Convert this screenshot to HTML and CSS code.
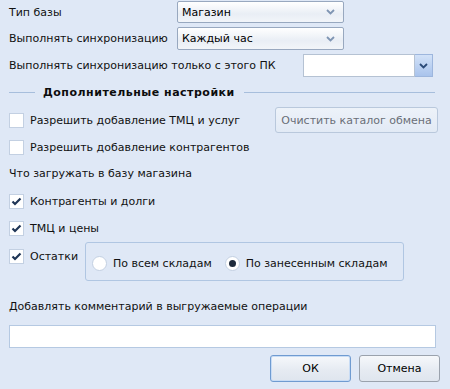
FILE: index.html
```html
<!DOCTYPE html>
<html>
<head>
<meta charset="utf-8">
<link rel="stylesheet" href="styles.css">
</head>
<body>
<div class="form">
  <div class="row r1">
    <span class="lbl w168">Тип базы</span>
    <div class="select s1"><span>Магазин</span><svg class="chev" width="9" height="6" viewBox="0 0 9 6"><path d="M1 1 L4.5 4.5 L8 1" fill="none" stroke="#7f95b3" stroke-width="1.8"/></svg></div>
  </div>
  <div class="row r2">
    <span class="lbl w168">Выполнять синхронизацию</span>
    <div class="select s2"><span>Каждый час</span><svg class="chev" width="9" height="6" viewBox="0 0 9 6"><path d="M1 1 L4.5 4.5 L8 1" fill="none" stroke="#7f95b3" stroke-width="1.8"/></svg></div>
  </div>
  <div class="row r3">
    <span class="lbl grow">Выполнять синхронизацию только с этого ПК</span>
    <div class="combo"><div class="cinput"></div><div class="trigger"><svg width="9" height="6" viewBox="0 0 9 6"><path d="M1 1 L4.5 4.5 L8 1" fill="none" stroke="#2b4a78" stroke-width="1.8"/></svg></div></div>
  </div>
  <div class="legend"><span class="line l1"></span><span class="ltext">Дополнительные настройки</span><span class="line l2"></span></div>
  <div class="row r4">
    <span class="cb"></span><span class="lbl grow">Разрешить добавление ТМЦ и услуг</span>
    <div class="btn clear">Очистить каталог обмена</div>
  </div>
  <div class="row r5"><span class="cb"></span><span class="lbl">Разрешить добавление контрагентов</span></div>
  <div class="row r6"><span class="lbl">Что загружать в базу магазина</span></div>
  <div class="row r7"><span class="cb on"><svg width="11" height="9" viewBox="0 0 11 9"><path d="M1.5 4.5 L4 7 L9.5 1.5" fill="none" stroke="#1f3556" stroke-width="2.2"/></svg></span><span class="lbl">Контрагенты и долги</span></div>
  <div class="row r8"><span class="cb on"><svg width="11" height="9" viewBox="0 0 11 9"><path d="M1.5 4.5 L4 7 L9.5 1.5" fill="none" stroke="#1f3556" stroke-width="2.2"/></svg></span><span class="lbl">ТМЦ и цены</span></div>
  <div class="row r9">
    <div class="ost"><span class="cb on"><svg width="11" height="9" viewBox="0 0 11 9"><path d="M1.5 4.5 L4 7 L9.5 1.5" fill="none" stroke="#1f3556" stroke-width="2.2"/></svg></span><span class="lbl">Остатки</span></div>
    <div class="rgroup">
      <span class="radio"></span><span class="lbl rl1">По всем складам</span>
      <span class="radio sel"><span class="dot"></span></span><span class="lbl">По занесенным складам</span>
    </div>
  </div>
  <div class="row r10"><span class="lbl">Добавлять комментарий в выгружаемые операции</span></div>
  <div class="tinput"></div>
  <div class="buttons">
    <div class="btn ok">ОК</div>
    <div class="btn cancel">Отмена</div>
  </div>
</div>
</body>
</html>
```
FILE: styles.css
```css
html, body { margin: 0; padding: 0; }
body {
  background: #dfe8f6;
  font-family: "DejaVu Sans", Verdana, sans-serif;
  font-size: 11px;
  color: #111;
  width: 450px;
  height: 389px;
  overflow: hidden;
}
.form { padding: 1px 0 0 9px; }
.row { display: flex; align-items: center; }
.lbl { white-space: nowrap; }
.w168 { width: 168px; }
.grow { flex: 1; }
.select {
  box-sizing: border-box;
  width: 167px;
  border: 1px solid #98a8bf;
  border-radius: 2px;
  background: linear-gradient(#ffffff 0%, #e9eef5 60%, #f2f5f9 100%);
  display: flex; align-items: center; justify-content: space-between;
  padding: 0 8px 0 4px;
  color: #000;
}
.s1 { height: 22px; }
.s2 { height: 23px; }
.r2 { margin-top: 4px; }
.r3 { margin-top: 4px; padding-right: 17px; }
.combo { display: flex; }
.cinput { box-sizing: border-box; width: 112px; height: 23px; background: #fff; border: 1px solid #b5c2d3; }
.trigger {
  box-sizing: border-box; width: 18px; height: 23px;
  background: linear-gradient(#d2e2f8, #a9c3ec);
  border: 1px solid #9db6dd; border-left: none;
  display: flex; align-items: center; justify-content: center;
}
.legend { display: flex; align-items: center; margin-top: 8px; height: 14px; padding-right: 15px; }
.line { height: 1px; background: #a7bedc; }
.l1 { width: 26px; }
.l2 { flex: 1; }
.ltext { font-weight: bold; padding: 0 9px 0 8px; color: #0d0d0d; letter-spacing: 0.5px; }
.cb {
  box-sizing: border-box; width: 15px; height: 15px;
  background: #fff; border: 1px solid #c3d0e2;
  margin-right: 6px; flex: none;
  display: flex; align-items: center; justify-content: center;
}
.cb svg { margin-top: -1px; }
.r4 { margin-top: 8px; padding-right: 12px; }
.btn {
  box-sizing: border-box;
  border-radius: 3px;
  display: flex; align-items: center; justify-content: center;
  white-space: nowrap;
}
.clear {
  width: 163px; height: 26px;
  border: 1px solid #b9c8dc;
  background: linear-gradient(#edf2f9, #e2eaf5);
  color: #6a6f78;
}
.r5 { margin-top: 7px; }
.r6 { margin-top: 11px; height: 14px; }
.r7 { margin-top: 14px; }
.r8 { margin-top: 12px; }
.r9 { margin-top: 6px; align-items: flex-start; }
.ost { display: flex; align-items: center; margin-top: 7px; width: 76px; }
.rgroup {
  box-sizing: border-box; width: 319px; height: 39px;
  border: 1px solid #b0c6e2; border-radius: 3px;
  display: flex; align-items: center;
  padding: 4px 0 0 6px;
}
.radio {
  box-sizing: border-box; width: 15px; height: 15px; border-radius: 50%;
  background: #fff; border: 1px solid #c3d0e2; margin-right: 6px; flex: none;
  display: flex; align-items: center; justify-content: center;
}
.dot { width: 7px; height: 7px; border-radius: 50%; background: #1e2a3c; }
.rl1 { margin-right: 13px; }
.r10 { margin-top: 18px; height: 14px; }
.tinput {
  box-sizing: border-box; width: 427px; height: 23px; margin-top: 12px;
  background: #fff; border: 1px solid #b5c9e2;
}
.buttons { display: flex; gap: 8px; margin-top: 7px; padding-left: 261px; }
.ok, .cancel { width: 81px; height: 27px; background: linear-gradient(#f6f8fb 0%, #e6ebf2 55%, #dfe5ee 100%); color: #000; }
.ok { border: 1px solid #6f9bd1; box-shadow: inset 0 0 0 1px #c8dcf5; }
.cancel { border: 1px solid #9aa2ad; }
```
